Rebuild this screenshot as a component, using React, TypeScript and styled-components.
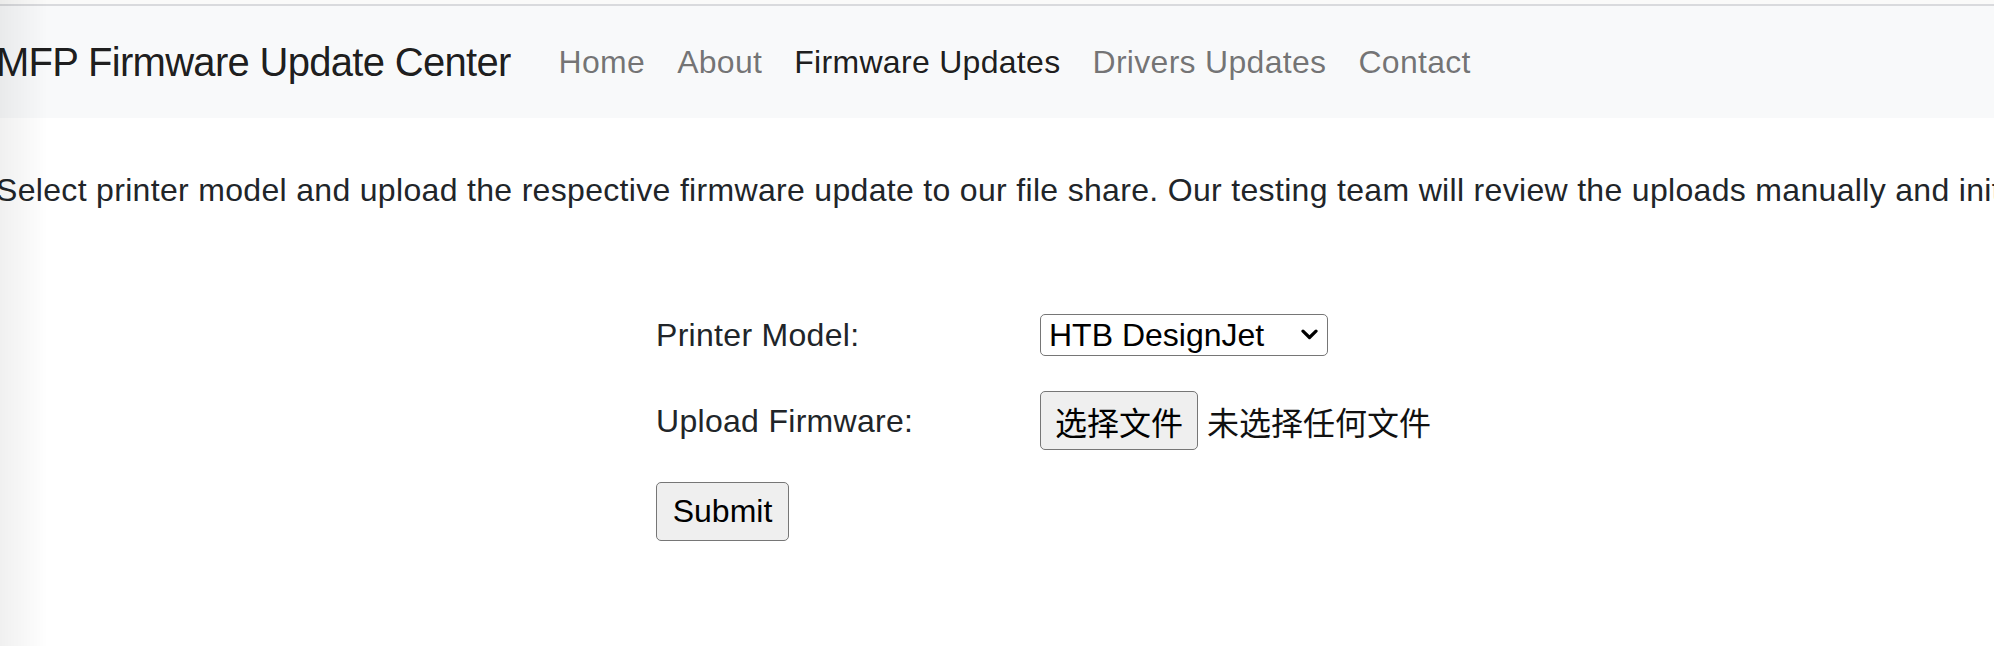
import React from "react";
import styled, { createGlobalStyle } from "styled-components";

const GlobalStyle = createGlobalStyle`
  html, body {
    margin: 0;
    padding: 0;
    overflow: hidden;
    background: #ffffff;
  }
  body {
    font-family: "Liberation Sans", Arial, "Noto Sans CJK SC", sans-serif;
    color: #212529;
  }
  * { box-sizing: border-box; }
`;

const Page = styled.div`
  margin-left: -28px;
  width: calc(100% + 28px);
`;

const TopEdge = styled.div`
  height: 6px;
  background: #fafaf9;
  border-bottom: 2px solid #d9dadd;
`;

const Navbar = styled.nav`
  background: #f8f9fa;
  padding: 16px 24px;
  display: flex;
  align-items: center;
  height: 112px;
`;

const Brand = styled.a`
  font-size: 40px;
  line-height: 60px;
  letter-spacing: -0.7px;
  color: rgba(0, 0, 0, 0.9);
  text-decoration: none;
  margin-right: 32px;
  white-space: nowrap;
`;

const NavList = styled.ul`
  display: flex;
  list-style: none;
  margin: 0;
  padding: 0;
`;

const NavLink = styled.a<{ $active?: boolean }>`
  display: block;
  padding: 16px;
  font-size: 32px;
  line-height: 48px;
  letter-spacing: 0.3px;
  white-space: nowrap;
  text-decoration: none;
  color: ${(p) => (p.$active ? "rgba(0,0,0,0.9)" : "rgba(0,0,0,0.55)")};
`;

const Main = styled.main`
  padding: 48px 24px 0;
`;

const Intro = styled.p`
  margin: 0 0 32px;
  font-size: 32px;
  line-height: 48px;
  letter-spacing: 0.32px;
  white-space: nowrap;
`;

const Form = styled.form`
  margin: 97px 0 0 660px;
  display: flex;
  flex-direction: column;
  gap: 32px;
  align-items: flex-start;
`;

const Row = styled.div<{ $h: number }>`
  display: grid;
  grid-template-columns: 384px auto;
  align-items: center;
  height: ${(p) => p.$h}px;
`;

const Label = styled.label`
  font-size: 32px;
  line-height: 48px;
  letter-spacing: 0.3px;
  color: #212529;
  white-space: nowrap;
`;

const SelectWrap = styled.div`
  position: relative;
  width: 288px;
  height: 42px;
`;

const Select = styled.select`
  appearance: none;
  -webkit-appearance: none;
  width: 100%;
  height: 100%;
  padding: 0 30px 0 8px;
  font-family: "Liberation Sans", Arial, sans-serif;
  font-size: 32px;
  color: #000;
  background: #fff;
  border: 1px solid #767676;
  border-radius: 5px;
  outline: none;
`;

const Chevron = styled.svg`
  position: absolute;
  right: 10px;
  top: 15px;
  pointer-events: none;
`;

const FileField = styled.div`
  display: flex;
  align-items: center;
  gap: 9px;
  white-space: nowrap;
`;

const NativeButton = styled.button<{ $w: number }>`
  width: ${(p) => p.$w}px;
  height: 59px;
  padding: 0;
  font-family: "Liberation Sans", Arial, "Noto Sans CJK SC", sans-serif;
  font-size: 32px;
  color: #000;
  background: #efefef;
  border: 1px solid #767676;
  border-radius: 5px;
  display: flex;
  align-items: center;
  justify-content: center;
`;

const FileStatus = styled.span`
  font-family: "Noto Sans CJK SC", sans-serif;
  font-size: 32px;
  color: #111;
`;

const EdgeShadow = styled.div`
  position: fixed;
  left: 0;
  top: 0;
  bottom: 0;
  width: 48px;
  pointer-events: none;
  background: linear-gradient(to right, rgba(0, 0, 0, 0.06), rgba(0, 0, 0, 0));
`;

export default function App() {
  const links = ["Home", "About", "Firmware Updates", "Drivers Updates", "Contact"];
  return (
    <>
      <GlobalStyle />
      <Page>
        <TopEdge />
        <Navbar>
          <Brand href="#">MFP Firmware Update Center</Brand>
          <NavList>
            {links.map((l) => (
              <li key={l}>
                <NavLink href="#" $active={l === "Firmware Updates"}>
                  {l}
                </NavLink>
              </li>
            ))}
          </NavList>
        </Navbar>
        <Main>
          <Intro>
            Select printer model and upload the respective firmware update to our file share. Our testing team will
            review the uploads manually and initiate the deployment process.
          </Intro>
          <Form onSubmit={(e) => e.preventDefault()}>
            <Row $h={48}>
              <Label>Printer Model:</Label>
              <SelectWrap>
                <Select defaultValue="htb">
                  <option value="htb">HTB DesignJet</option>
                </Select>
                <Chevron width="17" height="11" viewBox="0 0 17 11">
                  <path d="M2 2.2 L8.5 8.5 L15 2.2" fill="none" stroke="#000" strokeWidth="3.2" strokeLinecap="round" strokeLinejoin="round" />
                </Chevron>
              </SelectWrap>
            </Row>
            <Row $h={59}>
              <Label>Upload Firmware:</Label>
              <FileField>
                <NativeButton type="button" $w={158}>选择文件</NativeButton>
                <FileStatus>未选择任何文件</FileStatus>
              </FileField>
            </Row>
            <NativeButton type="submit" $w={133} style={{ height: 59 }}>
              Submit
            </NativeButton>
          </Form>
        </Main>
      </Page>
      <EdgeShadow />
    </>
  );
}
